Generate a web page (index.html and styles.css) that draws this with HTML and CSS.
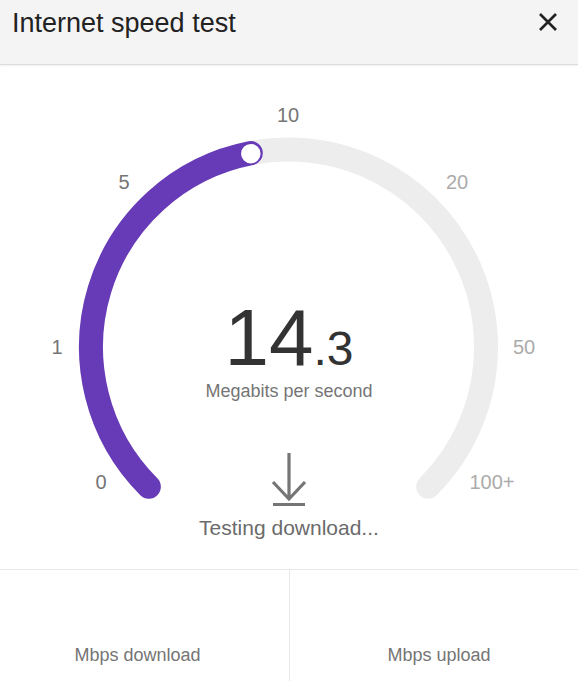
FILE: index.html
```html
<!DOCTYPE html>
<html>
<head>
<meta charset="utf-8">
<link rel="stylesheet" href="styles.css">
</head>
<body>
<header class="topbar">
  <h1 class="title">Internet speed test</h1>
  <button class="close" aria-label="Close">
    <svg width="20" height="20" viewBox="0 0 20 20"><path d="M2 2 L18 18 M18 2 L2 18" stroke="#222" stroke-width="2.6" stroke-linecap="butt" fill="none"/></svg>
  </button>
</header>
<main class="gauge">
  <svg class="dial" width="578" height="504" viewBox="0 0 578 504">
    <path d="M148.85 421.65 A197.5 197.5 0 1 1 428.15 421.65" fill="none" stroke="#ededed" stroke-width="24" stroke-linecap="round"/>
    <path d="M148.85 421.65 A197.5 197.5 0 0 1 250.81 88.13" fill="none" stroke="#673ab7" stroke-width="24" stroke-linecap="round"/>
    <circle cx="250.81" cy="88.63" r="10.5" fill="#fff" stroke="#673ab7" stroke-width="1.5"/>
  </svg>
  <span class="tick dark" style="left:288px;top:50px">10</span>
  <span class="tick dark" style="left:124px;top:117px">5</span>
  <span class="tick light" style="left:457px;top:117px">20</span>
  <span class="tick dark" style="left:57px;top:282px">1</span>
  <span class="tick light" style="left:524px;top:282px">50</span>
  <span class="tick dark" style="left:101px;top:417px">0</span>
  <span class="tick light" style="left:492px;top:417px">100+</span>
  <div class="readout">
    <div class="value"><span class="int">14</span><span class="frac">.3</span></div>
    <div class="unit">Megabits per second</div>
    <svg class="dl" width="40" height="54" viewBox="0 0 40 54">
      <path d="M20 0 V46 M4 29 L20 46 L36 29 M4 51.5 H36" fill="none" stroke="#757575" stroke-width="3.2"/>
    </svg>
    <div class="status">Testing download...</div>
  </div>
</main>
<section class="results">
  <div class="cell cell-down">Mbps download</div>
  <div class="cell cell-up">Mbps upload</div>
</section>
</body>
</html>
```
FILE: styles.css
```css
* { box-sizing: border-box; }
html, body { margin: 0; padding: 0; background: #fff; }
body { font-family: "Liberation Sans", Arial, sans-serif; width: 578px; overflow: hidden; }

.topbar {
  height: 65px;
  background: #f4f4f4;
  border-bottom: 1px solid #dcdcdc;
  box-shadow: 0 1px 2px rgba(0,0,0,0.06);
  display: flex;
  align-items: flex-start;
  justify-content: space-between;
  padding: 7px 20px 0 12px;
}
.title {
  margin: 0;
  font-size: 27px;
  line-height: 32px;
  font-weight: normal;
  color: #222;
}
.close {
  border: 0;
  background: none;
  padding: 0;
  margin-top: 5px;
  width: 20px;
  height: 20px;
  display: block;
}
.close svg { display: block; }

.gauge {
  position: relative;
  height: 504px;
}
.dial { position: absolute; left: 0; top: 0; }
.tick {
  position: absolute;
  transform: translate(-50%, -50%);
  font-size: 20px;
  line-height: 22px;
}
.tick.dark { color: #757575; }
.tick.light { color: #ababab; }

.readout {
  position: relative;
  padding-top: 233px;
  display: flex;
  flex-direction: column;
  align-items: center;
}
.value {
  height: 80px;
  line-height: 80px;
  color: #333;
  white-space: nowrap;
}
.int { font-size: 80px; line-height: 80px; }
.frac { font-size: 48px; line-height: 48px; }
.unit {
  margin-top: 1px;
  font-size: 18px;
  line-height: 24px;
  color: #757575;
}
.dl { display: block; margin-top: 50px; }
.status {
  margin-top: 9px;
  font-size: 21px;
  line-height: 24px;
  color: #6b6b6b;
}

.results {
  display: grid;
  grid-template-columns: 289px 289px;
  border-top: 1px solid #e8e8e8;
  height: 130px;
}
.cell {
  padding-top: 74px;
  text-align: center;
  font-size: 18px;
  line-height: 22px;
  color: #757575;
}
.cell-down { padding-right: 14px; }
.cell-up { border-left: 1px solid #e8e8e8; padding-left: 10px; }
```
